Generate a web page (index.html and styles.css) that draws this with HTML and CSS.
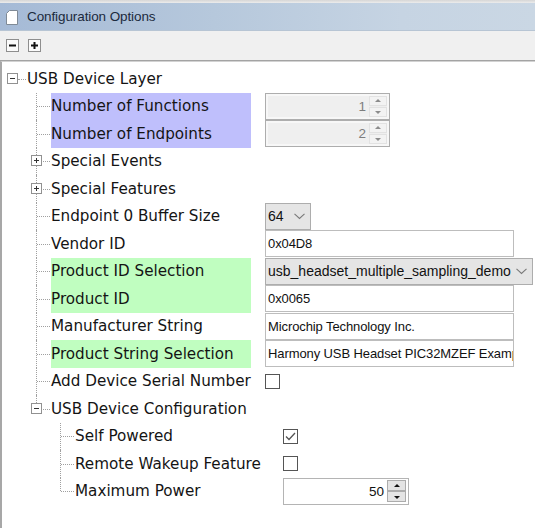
FILE: index.html
```html
<!DOCTYPE html>
<html>
<head>
<meta charset="utf-8">
<title>Configuration Options</title>
<link rel="stylesheet" href="styles.css">
</head>
<body>
<div class="panel">
  <div class="topline"></div>
  <div class="header">
    <svg class="doc-icon" width="12" height="15" viewBox="0 0 12 15"><path d="M3.5 0.5 H11.5 V14.5 H0.5 V3.5 Z" fill="#fff" stroke="#7f8a96"/></svg>
    <span class="title">Configuration Options</span>
  </div>
  <div class="toolbar">
    <span class="tbtn"><svg width="9" height="9" viewBox="0 0 9 9"><rect x="1" y="3.5" width="7" height="2" fill="#111"/></svg></span>
    <span class="tbtn"><svg width="9" height="9" viewBox="0 0 9 9"><rect x="1" y="3.5" width="7" height="2" fill="#111"/><rect x="3.5" y="1" width="2" height="7" fill="#111"/></svg></span>
  </div>
  <div class="tree">
    <div class="row">
      <span class="cell root"><span class="box minus"></span></span>
      <span class="label">USB Device Layer</span>
    </div>

    <div class="row">
      <span class="cell"></span><span class="cell conn"></span>
      <span class="label l1 purple">Number of Functions</span>
      <span class="spin disabled"><span class="spin-val">1</span><span class="spin-btns"><span class="sb up"></span><span class="sb down"></span></span></span>
    </div>
    <div class="row">
      <span class="cell"></span><span class="cell conn"></span>
      <span class="label l1 purple">Number of Endpoints</span>
      <span class="spin disabled"><span class="spin-val">2</span><span class="spin-btns"><span class="sb up"></span><span class="sb down"></span></span></span>
    </div>
    <div class="row">
      <span class="cell"></span><span class="cell conn"><span class="box plus"></span></span>
      <span class="label l1">Special Events</span>
    </div>
    <div class="row">
      <span class="cell"></span><span class="cell conn"><span class="box plus"></span></span>
      <span class="label l1">Special Features</span>
    </div>
    <div class="row">
      <span class="cell"></span><span class="cell conn"></span>
      <span class="label l1">Endpoint 0 Buffer Size</span>
      <span class="combo small"><span class="combo-text">64</span><svg class="chev" width="11" height="7" viewBox="0 0 11 7"><polyline points="0.5,0.8 5.5,5.5 10.5,0.8" fill="none" stroke="#7a7a7a" stroke-width="1.1"/></svg></span>
    </div>
    <div class="row">
      <span class="cell"></span><span class="cell conn"></span>
      <span class="label l1">Vendor ID</span>
      <span class="field">0x04D8</span>
    </div>
    <div class="row">
      <span class="cell"></span><span class="cell conn"></span>
      <span class="label l1 green">Product ID Selection</span>
      <span class="combo wide"><span class="combo-text">usb_headset_multiple_sampling_demo</span><svg class="chev" width="11" height="7" viewBox="0 0 11 7"><polyline points="0.5,0.8 5.5,5.5 10.5,0.8" fill="none" stroke="#7a7a7a" stroke-width="1.1"/></svg></span>
    </div>
    <div class="row">
      <span class="cell"></span><span class="cell conn"></span>
      <span class="label l1 green">Product ID</span>
      <span class="field">0x0065</span>
    </div>
    <div class="row">
      <span class="cell"></span><span class="cell conn"></span>
      <span class="label l1">Manufacturer String</span>
      <span class="field">Microchip Technology Inc.</span>
    </div>
    <div class="row">
      <span class="cell"></span><span class="cell conn"></span>
      <span class="label l1 green">Product String Selection</span>
      <span class="field">Harmony USB Headset PIC32MZEF Example</span>
    </div>
    <div class="row">
      <span class="cell"></span><span class="cell conn"></span>
      <span class="label l1">Add Device Serial Number</span>
      <span class="check"></span>
    </div>
    <div class="row">
      <span class="cell"></span><span class="cell conn last"><span class="box minus"></span></span>
      <span class="label l1">USB Device Configuration</span>
    </div>

    <div class="row">
      <span class="cell"></span><span class="cell"></span><span class="cell conn"></span>
      <span class="label l2">Self Powered</span>
      <span class="check"><svg width="13" height="13" viewBox="0 0 13 13"><polyline points="2,6.5 5,9.5 11,3" fill="none" stroke="#555" stroke-width="1.3"/></svg></span>
    </div>
    <div class="row">
      <span class="cell"></span><span class="cell"></span><span class="cell conn"></span>
      <span class="label l2">Remote Wakeup Feature</span>
      <span class="check"></span>
    </div>
    <div class="row">
      <span class="cell"></span><span class="cell"></span><span class="cell conn last"></span>
      <span class="label l2">Maximum Power</span>
      <span class="spin active"><span class="spin-val">50</span><span class="spin-btns"><span class="sb up"></span><span class="sb down"></span></span></span>
    </div>
  </div>
</div>
</body>
</html>
```

FILE: styles.css
```css
html, body {
  margin: 0;
  padding: 0;
  background: #ffffff;
}

body {
  font-family: "DejaVu Sans", Verdana, sans-serif;
  color: #111;
}

.panel {
  width: 535px;
  height: 528px;
  overflow: hidden;
  background: #fff;
}

.topline {
  height: 3px;
  background: linear-gradient(#d6d6d6, #ececec);
}

.header {
  height: 28px;
  display: flex;
  align-items: center;
  background: linear-gradient(to right, #a5bad6 0%, #b6c8dc 40%, #c6d4e3 75%, #cad7e4 100%);
  box-sizing: border-box;
  border-bottom: 1px solid #b7c5d4;
}

.doc-icon {
  margin-left: 6px;
  margin-top: 2px;
}

.title {
  margin-left: 9px;
  font-family: "Liberation Sans", Arial, sans-serif;
  font-size: 13.5px;
  color: #1b2a3d;
  letter-spacing: -0.1px;
}

.toolbar {
  height: 30px;
  background: #f0f0f0;
  display: flex;
  align-items: center;
  gap: 9px;
  padding-left: 6px;
  box-sizing: border-box;
  border-bottom: 1px solid #a3a3a3;
}

.tbtn {
  width: 13px;
  height: 13px;
  box-sizing: border-box;
  border: 1px solid #8e8e8e;
  background: #fbfbfb;
  display: flex;
  align-items: center;
  justify-content: center;
}

.tree {
  border-top: 1px solid #d2d2d2;
  border-left: 2px solid #a7a7a7;
  padding-top: 3px;
  height: 470px;
}

.row {
  height: 27.5px;
  display: flex;
  align-items: center;
  white-space: nowrap;
}

.cell {
  width: 24px;
  height: 100%;
  flex: none;
  position: relative;
}

.cell.root::after {
  content: "";
  position: absolute;
  left: 16px;
  right: 0;
  top: 50%;
  border-top: 1px dotted #a0a0a0;
}

.cell.conn::before {
  content: "";
  position: absolute;
  left: 10px;
  top: 0;
  bottom: 0;
  border-left: 1px dotted #a0a0a0;
}

.cell.conn.last::before {
  bottom: 50%;
}

.cell.conn::after {
  content: "";
  position: absolute;
  left: 11px;
  right: 0;
  top: 50%;
  border-top: 1px dotted #a0a0a0;
}

.box {
  position: absolute;
  left: 5px;
  top: 50%;
  margin-top: -6px;
  width: 11px;
  height: 11px;
  box-sizing: border-box;
  border: 1px solid #919191;
  background: #fff;
  z-index: 1;
}

.box::before {
  content: "";
  position: absolute;
  left: 2px;
  top: 4px;
  width: 5px;
  height: 1px;
  background: #333;
}

.box.plus::after {
  content: "";
  position: absolute;
  left: 4px;
  top: 2px;
  width: 1px;
  height: 5px;
  background: #333;
}

.label {
  margin-left: 1px;
  height: 100%;
  display: flex;
  align-items: center;
  font-size: 15.2px;
  color: #141414;
  flex: none;
}

.label.l1 {
  width: 200px;
  margin-right: 14px;
}

.label.l2 {
  width: 194px;
  margin-right: 14px;
}

.purple {
  background: #bfbffc;
}

.green {
  background: #c0fec0;
}

/* controls */
.field {
  width: 249px;
  height: 27px;
  box-sizing: border-box;
  border: 1px solid #bdbdbd;
  background: #fff;
  display: flex;
  align-items: center;
  padding-left: 2px;
  overflow: hidden;
  font-family: "Liberation Sans", Arial, sans-serif;
  font-size: 13px;
  letter-spacing: -0.1px;
  color: #111;
  flex: none;
}

.combo {
  height: 27px;
  box-sizing: border-box;
  border: 1px solid #adadad;
  background: #e5e5e5;
  display: flex;
  align-items: center;
  padding-left: 2px;
  font-family: "Liberation Sans", Arial, sans-serif;
  font-size: 14px;
  color: #111;
  flex: none;
}

.combo.small {
  width: 46px;
}

.combo.wide {
  width: 268px;
}

.combo-text {
  flex: 1;
  overflow: hidden;
}

.chev {
  margin-right: 5px;
  margin-left: 4px;
  flex: none;
}

.spin {
  height: 27px;
  box-sizing: border-box;
  display: flex;
  align-items: center;
  font-family: "Liberation Sans", Arial, sans-serif;
  font-size: 13.5px;
  flex: none;
}

.spin.disabled {
  width: 125px;
  border: 1px solid #adadad;
  background: #efefef;
  box-shadow: inset 0 0 0 2px #f7f7f7;
  color: #7d7d7d;
}

.spin.active {
  width: 126px;
  border: 1px solid #b4b4b4;
  background: #fff;
  color: #111;
}

.spin-val {
  flex: 1;
  text-align: right;
  padding-right: 3px;
}

.spin-btns {
  display: flex;
  flex-direction: column;
  margin-right: 2px;
  width: 18px;
}

.sb {
  height: 10px;
  box-sizing: border-box;
  position: relative;
  border: 1px solid #e2e2e2;
  background: #f3f3f3;
}

.sb.up {
  margin-bottom: 1px;
}

.sb::after {
  content: "";
  position: absolute;
  left: 50%;
  top: 50%;
  margin-left: -3px;
  width: 0;
  height: 0;
  border-left: 3px solid transparent;
  border-right: 3px solid transparent;
}

.sb.up::after {
  margin-top: -2px;
  border-bottom: 3px solid #8c8c8c;
}

.sb.down::after {
  margin-top: -1px;
  border-top: 3px solid #8c8c8c;
}

.spin.active .spin-btns {
  width: 19px;
}

.spin.active .sb {
  height: 11px;
  border: 1px solid #acacac;
  background: #e4e4e4;
}

.spin.active .sb.up {
  margin-bottom: 0;
}

.spin.active .sb.up::after {
  border-bottom-color: #111;
}

.spin.active .sb.down::after {
  border-top-color: #111;
}

.check {
  width: 15px;
  height: 15px;
  box-sizing: border-box;
  border: 1px solid #555;
  background: #fff;
  display: flex;
  align-items: center;
  justify-content: center;
  flex: none;
}
```
